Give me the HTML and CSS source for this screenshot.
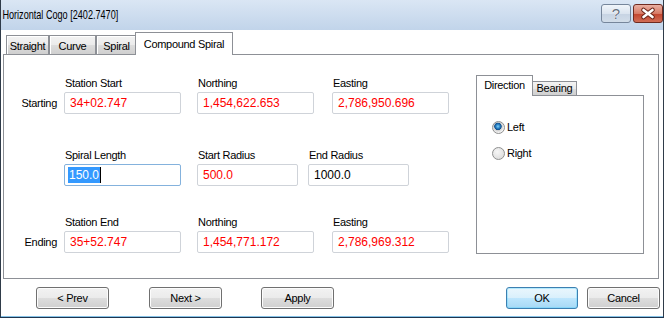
FILE: index.html
```html
<!DOCTYPE html>
<html lang="en">
<head>
    <meta charset="UTF-8">
    <title>Horizontal Cogo</title>
    <link rel="stylesheet" href="styles.css">
</head>
<body>

    <div class="window">
        <div class="titlebar">
            <span class="title">Horizontal Cogo [2402.7470]</span>
            <div class="caption-btns">
                <div class="cap-btn help">?</div>
                <div class="cap-btn close">
                    <svg width="28" height="17" viewBox="0 0 28 17">
                        <path d="M9.5 5 L18.5 12 M9.5 12 L18.5 5" stroke="#6a2418" stroke-width="4.6" stroke-linecap="round"/>
                        <path d="M9.5 5 L18.5 12 M9.5 12 L18.5 5" stroke="#fff" stroke-width="2.6" stroke-linecap="round"/>
                    </svg>
                </div>
            </div>
        </div>

        <div class="content">
            <!-- main tabs -->
            <div class="tabstrip">
                <div class="tab-gap"></div>
                <div class="tab t-straight">Straight</div>
                <div class="tab t-curve">Curve</div>
                <div class="tab t-spiral">Spiral</div>
                <div class="tab active t-compound">Compound Spiral</div>
                <div class="tab-fill"></div>
            </div>

            <div class="panel">
                <div class="fields">
                    <div class="row row-start">
                        <div class="side">Starting</div>
                        <div class="field">
                            <div class="lbl">Station Start</div>
                            <div class="box red">34+02.747</div>
                        </div>
                        <div class="field c2">
                            <div class="lbl">Northing</div>
                            <div class="box red">1,454,622.653</div>
                        </div>
                        <div class="field c3">
                            <div class="lbl">Easting</div>
                            <div class="box red">2,786,950.696</div>
                        </div>
                    </div>

                    <div class="row row-mid">
                        <div class="side"></div>
                        <div class="field">
                            <div class="lbl">Spiral Length</div>
                            <div class="box focus"><span class="sel">150.0</span></div>
                        </div>
                        <div class="field c2 short">
                            <div class="lbl">Start Radius</div>
                            <div class="box red">500.0</div>
                        </div>
                        <div class="field c3 short">
                            <div class="lbl">End Radius</div>
                            <div class="box">1000.0</div>
                        </div>
                    </div>

                    <div class="row row-end">
                        <div class="side">Ending</div>
                        <div class="field">
                            <div class="lbl">Station End</div>
                            <div class="box red">35+52.747</div>
                        </div>
                        <div class="field c2">
                            <div class="lbl">Northing</div>
                            <div class="box red">1,454,771.172</div>
                        </div>
                        <div class="field c3">
                            <div class="lbl">Easting</div>
                            <div class="box red">2,786,969.312</div>
                        </div>
                    </div>
                </div>

                <!-- Direction / Bearing -->
                <div class="dirbox">
                    <div class="dtabs">
                        <div class="dtab active">Direction</div>
                        <div class="dtab">Bearing</div>
                        <div class="dtab-fill"></div>
                    </div>
                    <div class="dpanel">
                        <div class="radio-row">
                            <span class="radio checked"></span>
                            <span>Left</span>
                        </div>
                        <div class="radio-row">
                            <span class="radio"></span>
                            <span>Right</span>
                        </div>
                    </div>
                </div>
            </div>

            <div class="buttons">
                <div class="btn b-prev">&lt; Prev</div>
                <div class="btn b-next">Next &gt;</div>
                <div class="btn b-apply">Apply</div>
                <div class="btn default b-ok">OK</div>
                <div class="btn b-cancel">Cancel</div>
            </div>
        </div>
    </div>

</body>
</html>
```

FILE: styles.css
```css
body {
    margin: 0;
    background-color: #fff;
    font-family: "Liberation Sans", Arial, sans-serif;
    font-size: 11px;
    letter-spacing: -0.3px;
    color: #000;
}

.window {
    width: 664px;
    height: 318px;
    box-sizing: border-box;
    border-left: 1px solid #2f3b49;
    border-right: 1px solid #2f3b49;
    border-bottom: 1px solid #1d3550;
    box-shadow: inset 0 -1px 0 #86c2e6;
    display: flex;
    flex-direction: column;
}

/* title bar */
.titlebar {
    height: 30px;
    display: flex;
    flex: none;
    background: linear-gradient(#dae6f4, #c1d4ea);
}

.title {
    font-size: 13px;
    letter-spacing: 0;
    line-height: 30px;
    padding-left: 2px;
    white-space: nowrap;
    transform: scaleX(0.7);
    transform-origin: left center;
}

.caption-btns {
    margin-left: auto;
    display: flex;
    gap: 2px;
    margin-top: 4px;
}

.cap-btn {
    width: 30px;
    height: 19px;
    box-sizing: border-box;
    border-radius: 3px;
    display: flex;
    align-items: center;
    justify-content: center;
}

.help {
    border: 1px solid #76869b;
    background: linear-gradient(#f0f5fa, #dbe4ef 50%, #c6d3e3 51%, #d2dde9);
    color: #66717f;
    font-size: 15px;
    letter-spacing: 0;
    text-shadow: 0 0 1px #fff, 0 0 1px #fff;
}

.close {
    border: 1px solid #6e2a20;
    background: linear-gradient(#eab0a2, #d77a66 50%, #c2432d 51%, #d16d56);
}

/* content */
.content {
    padding: 2px 4px 0 2px;
    display: flex;
    flex-direction: column;
}

.tabstrip {
    display: flex;
    align-items: flex-end;
    height: 23px;
}

.tab-gap {
    width: 3px;
    border-bottom: 1px solid #8d9096;
}

.tab-fill {
    flex: 1;
    border-bottom: 1px solid #8d9096;
}

.tab {
    height: 20px;
    box-sizing: border-box;
    border: 1px solid #8d9096;
    padding-top: 2px;
    line-height: 16px;
    text-align: center;
    background: linear-gradient(#f3f3f3, #ebebeb 50%, #dddddd 51%, #cfcfcf);
    box-shadow: inset 1px 1px 0 #fff;
}

.t-straight { width: 43px; }
.t-curve { width: 47px; }
.t-spiral { width: 41px; }

.tab.active {
    width: 98px;
    height: 23px;
    margin-left: -2px;
    padding-top: 3px;
    border-bottom: none;
    background: #fff;
    box-shadow: none;
}

.panel {
    height: 224px;
    border: 1px solid #8d9096;
    border-top: none;
    padding-top: 20px;
    box-sizing: border-box;
    display: flex;
    align-items: flex-start;
}

.fields {
    padding-top: 2px;
}

.row {
    display: flex;
    align-items: flex-end;
}

.row-mid {
    margin-top: 35px;
}

.row-end {
    margin-top: 30px;
}

.side {
    width: 60px;
    box-sizing: border-box;
    padding-right: 7px;
    text-align: right;
    line-height: 22px;
}

.field {
    width: 117px;
}

.field.short {
    width: 101px;
}

.c2 {
    margin-left: 16px;
}

.c3 {
    margin-left: 18px;
}

.row-mid .c3 {
    margin-left: 10px;
}

.lbl {
    line-height: 13px;
    height: 13px;
    margin-bottom: 2px;
    padding-left: 1px;
    white-space: nowrap;
}

.box {
    height: 22px;
    box-sizing: border-box;
    border: 1px solid #cfd3d9;
    border-radius: 2px;
    padding-left: 5px;
    font-size: 12px;
    letter-spacing: 0;
    line-height: 20px;
    white-space: nowrap;
}

.box.red {
    color: #ff0000;
}

.box.focus {
    border-color: #84b2dd;
    padding-left: 3px;
}

.sel {
    background-color: #3399ff;
    color: #fff;
    padding: 1px;
    border-right: 1px solid #000;
}

/* direction box */
.dirbox {
    width: 168px;
    margin-left: auto;
    margin-right: 14px;
}

.dtabs {
    display: flex;
    align-items: flex-end;
    height: 21px;
}

.dtab {
    height: 15px;
    box-sizing: border-box;
    border: 1px solid #8d9096;
    width: 45px;
    margin-left: -1px;
    line-height: 13px;
    text-align: center;
    background: linear-gradient(#f3f3f3, #e9e9e9 50%, #dcdcdc 51%, #d0d0d0);
}

.dtab.active {
    width: 57px;
    height: 21px;
    margin-left: 0;
    padding-top: 1px;
    line-height: 16px;
    border-bottom: none;
    background: #fff;
}

.dtab-fill {
    flex: 1;
    border-bottom: 1px solid #8d9096;
}

.dpanel {
    height: 158px;
    box-sizing: border-box;
    border: 1px solid #8d9096;
    border-top: none;
    padding: 25px 0 0 15px;
}

.radio-row {
    display: flex;
    align-items: center;
    gap: 2px;
    line-height: 13px;
    height: 13px;
}

.radio-row + .radio-row {
    margin-top: 13px;
}

.radio {
    width: 13px;
    height: 13px;
    box-sizing: border-box;
    border-radius: 50%;
    border: 1px solid #8e8f8f;
    background: radial-gradient(circle at 40% 35%, #f6f6f6, #d6d6d6);
}

.radio.checked {
    background: radial-gradient(circle at 45% 40%, #7fd2f7 0, #2a82c6 2px, #0f4f8c 3.4px, #cfcfcf 4px, #f2f2f2 6px);
}

/* bottom buttons */
.buttons {
    display: flex;
    margin-top: 8px;
    padding-left: 33px;
    margin-right: -1px;
}

.btn {
    width: 73px;
    height: 22px;
    box-sizing: border-box;
    border: 1px solid #707070;
    border-radius: 3px;
    background: linear-gradient(#f2f2f2, #ebebeb 50%, #dddddd 51%, #cfcfcf);
    box-shadow: inset 0 0 0 1px #fcfcfc;
    text-align: center;
    line-height: 20px;
}

.b-next {
    margin-left: 40px;
}

.b-apply {
    margin-left: 39px;
}

.b-ok {
    margin-left: auto;
    width: 72px;
}

.b-cancel {
    margin-left: 9px;
}

.btn.default {
    border-color: #3c7fb1;
    background: linear-gradient(#eaf6fd, #d9f0fc 50%, #bee6fd 51%, #a7d9f5);
    box-shadow: inset 0 0 0 1px #48d1ff55;
}
```
